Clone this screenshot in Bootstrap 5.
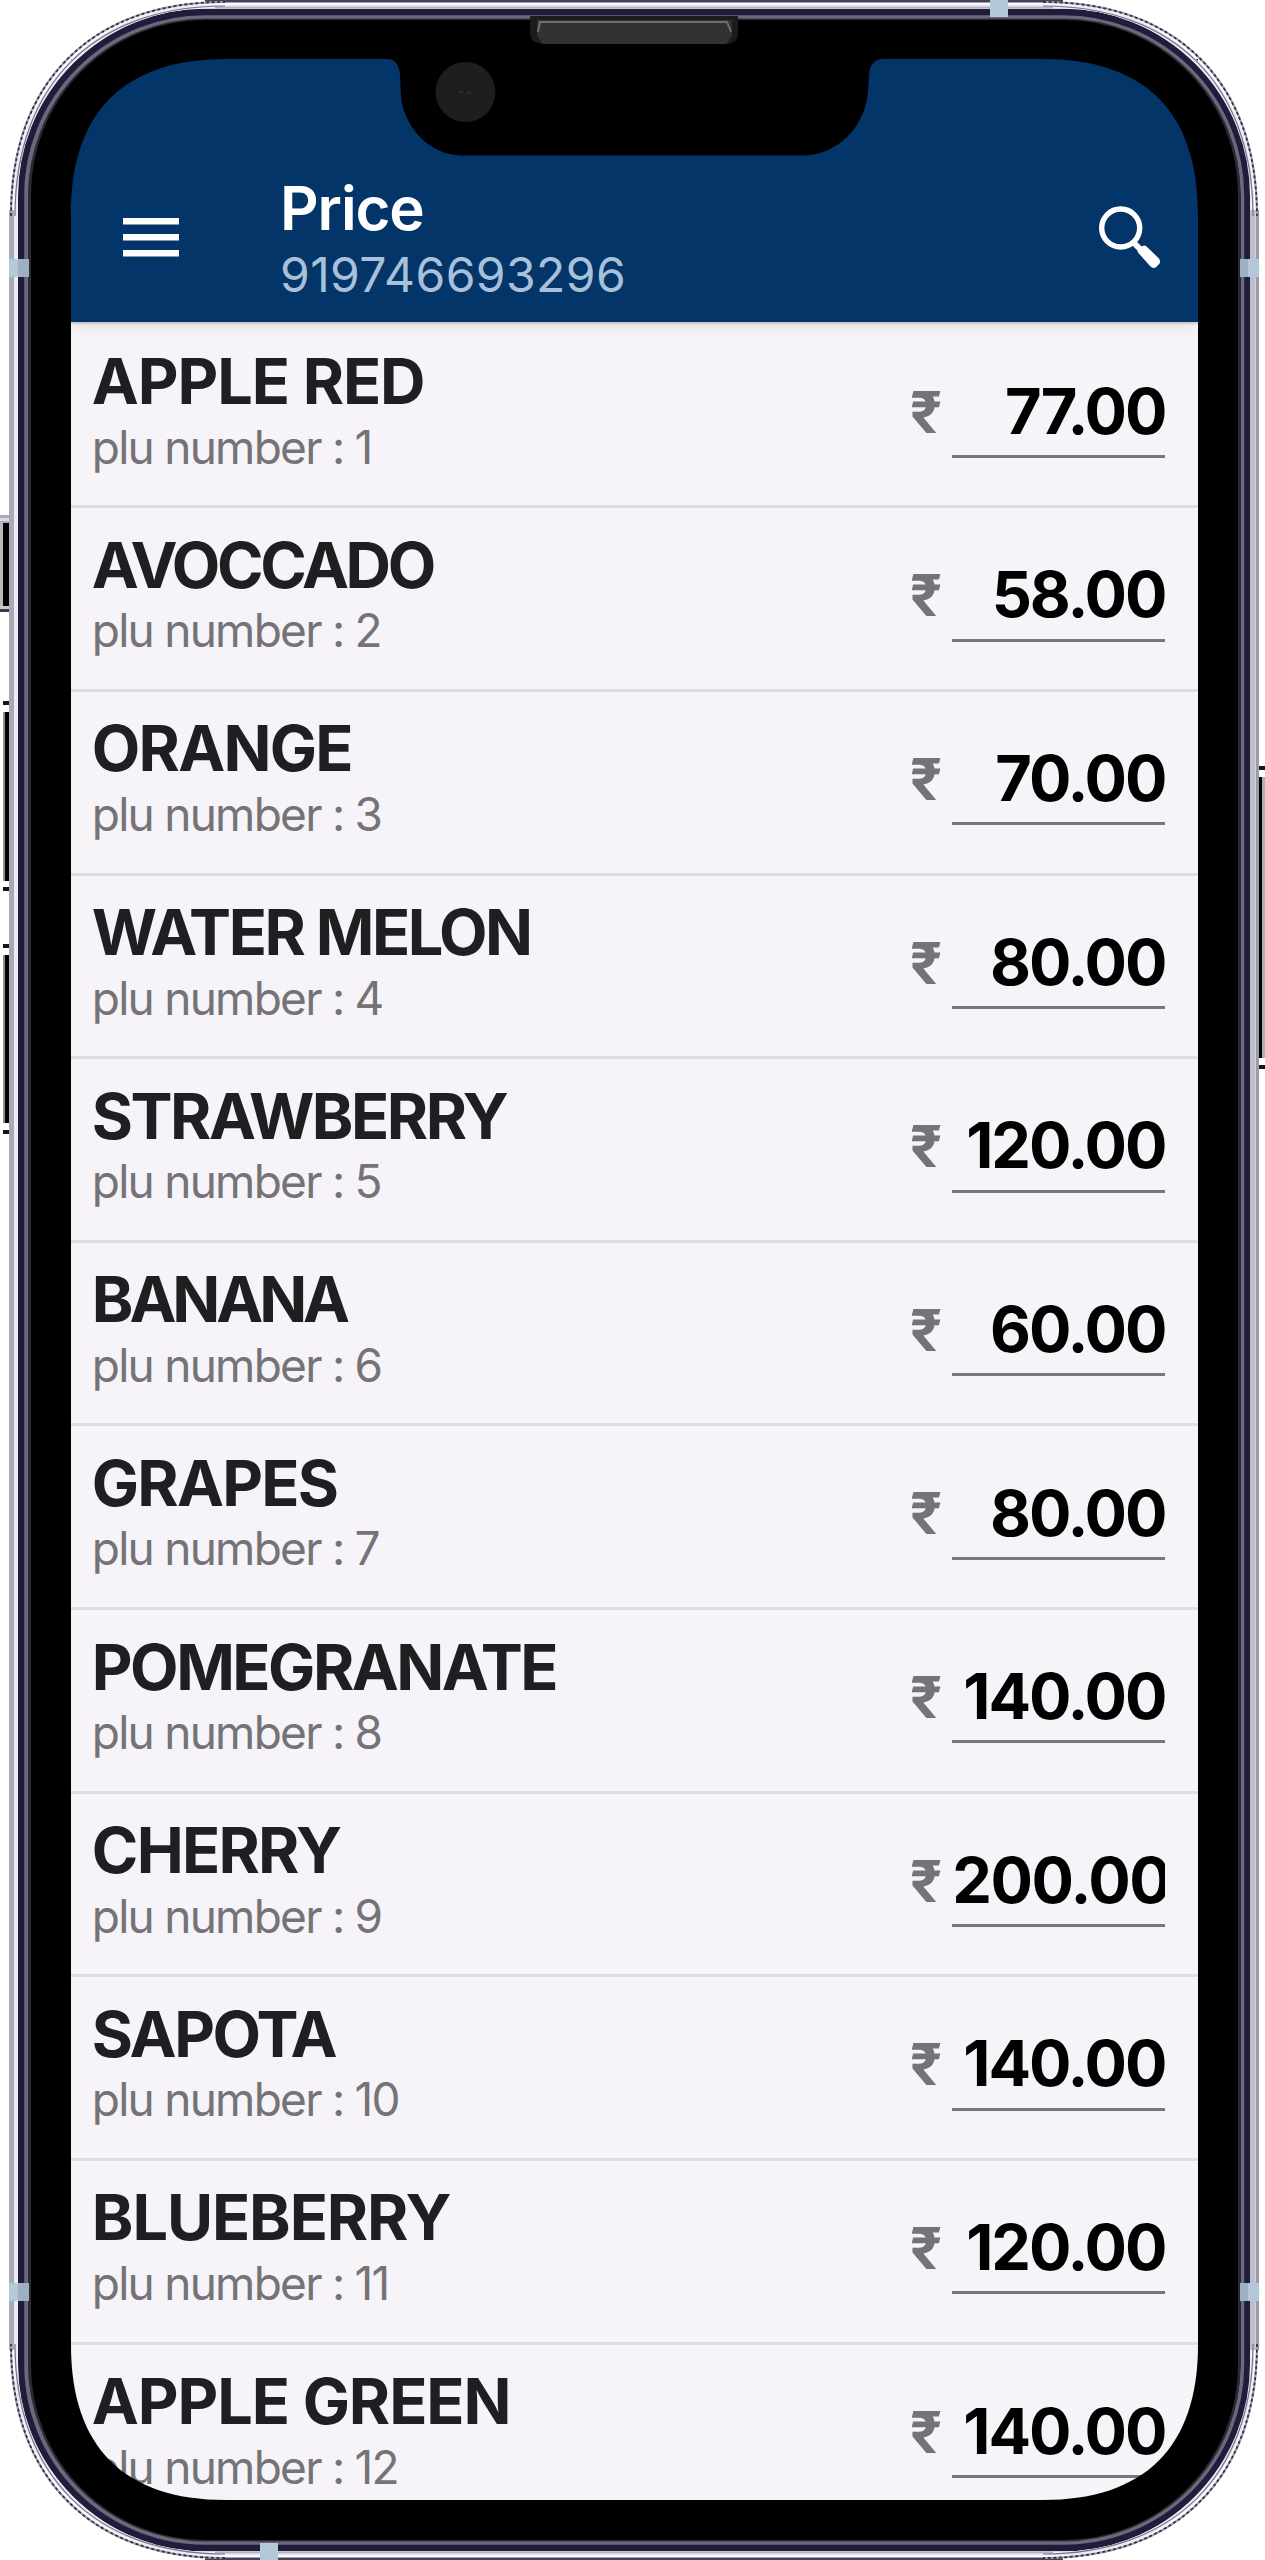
<!DOCTYPE html>
<html lang="en">
<head>
<meta charset="utf-8">
<meta name="viewport" content="width=device-width, initial-scale=1">
<title>Price</title>
<link href="https://cdn.jsdelivr.net/npm/bootstrap@5.3.0/dist/css/bootstrap.min.css" rel="stylesheet">
<style>
body{background:#fff;font-family:Inter,"Liberation Sans",sans-serif;overflow:hidden}
.phone{width:1265px;height:2560px;padding:59px 67px 60px 71px}
.phone-screen{background:#f6f4f8}
.app-bar{height:262.7px;flex:none;background:#033568;padding:116.2px 36px 0 52px;box-shadow:0 1px 3px rgba(60,60,80,.35),0 3px 18px rgba(90,90,70,.12)}
.menu-icon{width:56px;height:39px;margin-top:42.5px}
.find-icon{width:66px;height:66px;margin-top:29px}
.app-titles{margin-left:101px}
.app-title{font-size:60px;line-height:66px;font-weight:600;letter-spacing:-1.1px}
.app-sub{font-size:48px;line-height:54px;color:#a9c0da;margin-top:6.6px;letter-spacing:.4px}
.price-list{padding-top:3px}
.price-row{height:183.63px;flex:none;border-bottom:3px solid #dfdde1;padding:21.5px 32.7px 0 20.8px}
.item-name{font-size:63px;line-height:70px;font-weight:700;color:#211e22;letter-spacing:-1.1px;white-space:nowrap}
.fit-a{letter-spacing:-1.75px}
.fit-b{letter-spacing:-2.5px}
.fit-c{letter-spacing:-3.3px}
.fit-d{letter-spacing:-4.1px}
.item-plu{font-size:46px;line-height:54px;color:#757376;margin-top:3.5px;letter-spacing:-1.75px}
.rupee{font:700 59px/70px Roboto,sans-serif;color:#757376;width:41.8px;margin-top:31.5px}
.price-field{width:213px;height:86.3px;margin-top:25.6px;border-bottom:3px solid #79767b;font-size:63px;line-height:78.7px;font-weight:700;color:#000;letter-spacing:-2.1px;white-space:nowrap}
.price-full{letter-spacing:-1.5px;overflow:hidden}
.frame-art{z-index:5;pointer-events:none}
</style>
</head>
<body>
<main class="phone position-relative d-flex">
  <div class="phone-screen flex-fill d-flex flex-column overflow-hidden">
    <header class="app-bar d-flex align-items-start text-white position-relative">
      <svg class="menu-icon" viewBox="0 0 56 39" fill="#fff"><path d="M0 0h56v6.6H0zM0 16h56v6.6H0zM0 32h56v6.6H0z"/></svg>
      <div class="app-titles">
        <div class="app-title">Price</div>
        <div class="app-sub">919746693296</div>
      </div>
      <svg class="find-icon ms-auto" viewBox="0 0 66 66"><circle cx="24.7" cy="24" r="19" fill="none" stroke="#fff" stroke-width="5.4"/><path d="M37 38l7 7" stroke="#fff" stroke-width="6"/><path d="M42 48.5Q41 46.500 43 45L46.500 42Q48.500 41.200 50 42L62.500 54Q65 57 63.500 59.500L60 63.300Q57 65 54.500 62.500Z" fill="#fff"/></svg>
    </header>
    <div class="price-list d-flex flex-column">
      <div class="price-row d-flex"><div class="me-auto"><div class="item-name">APPLE RED</div><div class="item-plu">plu number : 1</div></div><div class="rupee">₹</div><div class="price-field text-end">77.00</div></div>
      <div class="price-row d-flex"><div class="me-auto"><div class="item-name fit-c">AVOCCADO</div><div class="item-plu">plu number : 2</div></div><div class="rupee">₹</div><div class="price-field text-end">58.00</div></div>
      <div class="price-row d-flex"><div class="me-auto"><div class="item-name fit-a">ORANGE</div><div class="item-plu">plu number : 3</div></div><div class="rupee">₹</div><div class="price-field text-end">70.00</div></div>
      <div class="price-row d-flex"><div class="me-auto"><div class="item-name fit-b">WATER MELON</div><div class="item-plu">plu number : 4</div></div><div class="rupee">₹</div><div class="price-field text-end">80.00</div></div>
      <div class="price-row d-flex"><div class="me-auto"><div class="item-name fit-b">STRAWBERRY</div><div class="item-plu">plu number : 5</div></div><div class="rupee">₹</div><div class="price-field text-end">120.00</div></div>
      <div class="price-row d-flex"><div class="me-auto"><div class="item-name fit-d">BANANA</div><div class="item-plu">plu number : 6</div></div><div class="rupee">₹</div><div class="price-field text-end">60.00</div></div>
      <div class="price-row d-flex"><div class="me-auto"><div class="item-name fit-a">GRAPES</div><div class="item-plu">plu number : 7</div></div><div class="rupee">₹</div><div class="price-field text-end">80.00</div></div>
      <div class="price-row d-flex"><div class="me-auto"><div class="item-name fit-b">POMEGRANATE</div><div class="item-plu">plu number : 8</div></div><div class="rupee">₹</div><div class="price-field text-end">140.00</div></div>
      <div class="price-row d-flex"><div class="me-auto"><div class="item-name fit-a">CHERRY</div><div class="item-plu">plu number : 9</div></div><div class="rupee">₹</div><div class="price-field price-full">200.00</div></div>
      <div class="price-row d-flex"><div class="me-auto"><div class="item-name fit-b">SAPOTA</div><div class="item-plu">plu number : 10</div></div><div class="rupee">₹</div><div class="price-field text-end">140.00</div></div>
      <div class="price-row d-flex"><div class="me-auto"><div class="item-name">BLUEBERRY</div><div class="item-plu">plu number : 11</div></div><div class="rupee">₹</div><div class="price-field text-end">120.00</div></div>
      <div class="price-row d-flex"><div class="me-auto"><div class="item-name">APPLE GREEN</div><div class="item-plu">plu number : 12</div></div><div class="rupee">₹</div><div class="price-field text-end">140.00</div></div>
    </div>
  </div>
  <svg class="frame-art position-absolute top-0 start-0" width="1265" height="2560" viewBox="0 0 1265 2560">
    <!-- side buttons -->
    <g>
      <path fill="#aaa9b7" d="M0 515h12v8H0z"/><path fill="#d9d9e2" d="M0 518h10v3H0z"/><path fill="#b3bbbd" d="M0 522h3v84H0z"/><path fill="#000" d="M3 523h9v83H3z"/><path fill="#c9c9d2" d="M0 606h12v3H0z"/><path fill="#3c3a4c" d="M0 609h12v3H0z"/>
      <path fill="#15141f" d="M3 701h9v4H3zM3 887h9v4H3zM3 944h9v4H3zM3 1130h9v4H3z"/>
      <path fill="#89938f" d="M3 712h3v169H3zM3 955h3v168H3z"/><path fill="#000" d="M5 712h7v169H5zM5 955h7v168H5z"/>
      <path fill="#15141f" d="M1256 766h9v4h-9zM1256 1065h9v4h-9z"/><path fill="#a7b3b3" d="M1261 777h4v281h-4z"/><path fill="#000" d="M1256 777h6v281h-6z"/>
    </g>
    <!-- black bezel with the screen opening and the notch -->
    <path fill="#000" fill-rule="evenodd" d="M205 18H1063A178 178 0 0 1 1241 196V2364A178 178 0 0 1 1063 2542H205A178 178 0 0 1 27 2364V196A178 178 0 0 1 205 18Z
      M226 59H387C396 59 399.500 66 400 75C401 98 401 103 405 113C414 138 437 155.500 463 155.500H803C829 155.500 853 138 863 113C868 101 868 92 869 75C869.500 66 874 59 882 59H1043C1145 59 1198 112 1198 214V2345C1198 2447 1145 2500 1043 2500H226C124 2500 71 2447 71 2345V214C71 112 124 59 226 59Z"/>
    <!-- metal rim, inside to outside -->
    <g fill="none">
      <rect x="29.500" y="18.500" width="1210" height="2523" rx="176" stroke="#2a2b33" stroke-width="3"/>
      <rect x="26" y="16.500" width="1217" height="2527" rx="179.500" stroke="#6a6a7c" stroke-width="4"/>
      <rect x="21" y="12" width="1226.500" height="2536" rx="184" stroke="#1f1c3d" stroke-width="6.500"/>
      <rect x="16" y="6.500" width="1236" height="2547" rx="190" stroke="#ececf2" stroke-width="4"/>
      <path d="M11.500 210V2350" stroke="#a9a8b4" stroke-width="5"/>
      <path d="M1252.500 210V2350" stroke="#bdbfc8" stroke-width="5"/>
      <path d="M1257.300 210V2350" stroke="#9b9ba8" stroke-width="3.500"/>
      <path d="M215 7.500H1053M215 2552.500H1053" stroke="#b4b4c0" stroke-width="2"/>
      <path d="M205 1.200H1063M205 2558.800H1063" stroke="#45415a" stroke-width="2.600"/>
      <path d="M11 216C11 82 91 2 225 2M1043 2C1177 2 1257 82 1257 216M1257 2344C1257 2478 1177 2558 1043 2558M225 2558C91 2558 11 2478 11 2344" stroke="#a19fae" stroke-width="2.200"/>
      <path d="M11 216C11 82 91 2 225 2M1043 2C1177 2 1257 82 1257 216M1257 2344C1257 2478 1177 2558 1043 2558M225 2558C91 2558 11 2478 11 2344" stroke="#34324a" stroke-width="1.800" stroke-dasharray="3 2.500"/>
      <path d="M15 216C15 85 94 6 225 6M1043 6C1174 6 1253 85 1253 216M1253 2344C1253 2475 1174 2554 1043 2554M225 2554C94 2554 15 2475 15 2344" stroke="#77758a" stroke-width="1.200"/>
    </g>
    <!-- antenna bands -->
    <path fill="#b4c8da" d="M9 259h19v18H9zM1240 259h19v18h-19zM9 2283h19v18H9zM1240 2283h19v18h-19zM990 0h18v17h-18zM260 2543h18v17h-18z"/>
    <path fill="#9db0c2" d="M18 259h11v18H18zM1240 259h8v18h-8zM18 2283h11v18H18zM1240 2283h8v18h-8z"/>
    <!-- earpiece and camera -->
    <path d="M530 16H738V34Q738 42 728 44H542Q530 42 530 34Z" fill="#1b1c1c"/>
    <path d="M537 20H732V36L726 44H543L537 36Z" fill="#313232"/>
    <path d="M538 32L540 22H727L731 32" fill="none" stroke="#6d6e70" stroke-width="2"/>
    <circle cx="465.500" cy="92" r="30" fill="#1c1e1f"/>
    <path d="M459 92h4M467 93h4" stroke="#2b3037" stroke-width="2.500"/>
  </svg>
</main>
<script src="https://cdn.jsdelivr.net/npm/bootstrap@5.3.0/dist/js/bootstrap.bundle.min.js"></script>
</body>
</html>
